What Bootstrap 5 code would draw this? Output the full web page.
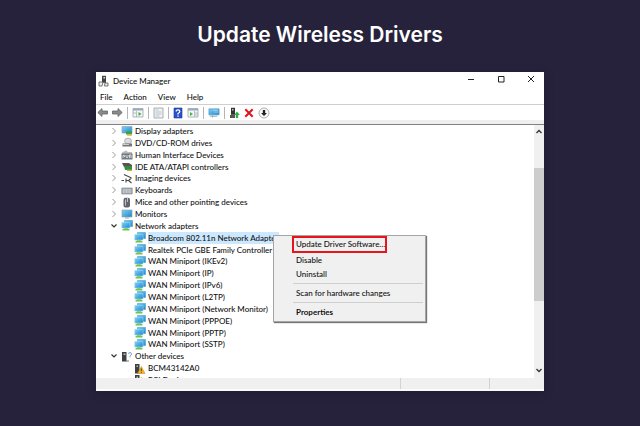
<!DOCTYPE html>
<html lang="en">
<head>
<meta charset="utf-8">
<meta name="viewport" content="width=device-width, initial-scale=1">
<title>Update Wireless Drivers</title>
<link rel="stylesheet" href="https://cdn.jsdelivr.net/npm/bootstrap@5.3.0/dist/css/bootstrap.min.css">
<style>
body { background: #26223c; color: #111; }
.page { min-height: 100vh; padding-top: 19px; }
.headline { font: 600 21px/32px Inter, sans-serif; color: #fff; margin-bottom: 21px; }
.win { width: 70%; background: #fff; font: 500 8px/12px Lato, sans-serif; box-shadow: 0 2px 10px rgba(0,0,0,.2); }
.win button, .win a { font: inherit; line-height: inherit; color: inherit; text-decoration: none; background: none; border: 0; padding: 0; }
.win svg { display: block; flex: none; }
.titlebar { height: 18px; padding: 0 2px; gap: 4px; }
.win .wbtn { width: 30px; height: 14px; display: flex; justify-content: center; align-items: center; }
.wbtns { margin-right: -4px; }
.menus { height: 14px; padding-left: 4px; gap: 11px; }
.tools { height: 16px; border-top: 1px solid #cfcfcf; padding: 0 1px; gap: 4px; }
.vsep { width: 1px; height: 12px; background: #b5b5b5; }
.rim { height: 5px; background: #efefef; border-bottom: 1px solid #808080; }
.view { height: 253px; }
.tree { height: 261px; margin: 0; padding: 0; list-style: none; }
.tree li { flex: 1 1 0; min-height: 0; display: flex; align-items: center; gap: 2px; padding-left: 15px; white-space: nowrap; }
.tree li.kid { padding-left: 38px; }
.chev { width: 6px; margin-right: 2px; }
.sel { background: #cce8ff; }
.scroll { width: 10px; background: #f0f0f0; }
.thumb { height: 133px; margin-top: 31px; background: #cdcdcd; }
.status { height: 13px; background: #f0f0f0; border-bottom: 2px solid #fafafa; }
.cell { border-right: 1px solid #d2d2d2; }
.cell-main { width: 68%; }
.cell-mid { width: 20%; }
.ctx { position: absolute; left: 177px; top: 163px; width: 153px; background: #f0f0f0; border: 1px solid #a5a5a5; box-shadow: 1px 1px 1px #777; padding: 0 1px 2px; line-height: 14px; }
.win .ctx button { display: block; text-align: left; padding-left: 21px; width: 100%; }
.win .ctx .hot { width: 95px; height: 17px; margin-left: 17px; padding-left: 2px; border: 2px solid #e8141c; line-height: 13px; white-space: nowrap; }
.rule { height: 1px; background: #cfcfcf; margin: 2px 1px 2px 18px; }
</style>
</head>
<body>
<svg width="0" height="0" class="position-absolute" aria-hidden="true">
<defs>
<linearGradient id="scr" x1="0" y1="0" x2="1" y2="1"><stop offset="0" stop-color="#7fd0f5"/><stop offset="1" stop-color="#1d87cf"/></linearGradient>
<symbol id="right" viewBox="0 0 6 8"><path d="M1.500 1 4.500 4 1.500 7" fill="none" stroke="#9a9a9a"/></symbol>
<symbol id="down" viewBox="0 0 6 8"><path d="M.5 2.500 3 5 5.500 2.500" fill="none" stroke="#333" stroke-width="1.200"/></symbol>
<symbol id="net" viewBox="0 0 12 11"><path d="M3.500 .5h8v6h-8z" fill="url(#scr)" stroke="#4e9fcb" stroke-width=".6"/><path d="M.8 2.500h8.200v5.500H.8z" fill="url(#scr)" stroke="#9bd6f2" stroke-width=".6"/><path d="M3.500 8.300h3l2 1v1.200H1.500V9.300z" fill="#6cc44e"/></symbol>
<symbol id="mon" viewBox="0 0 12 11"><path d="M1 2h10v7H1z" fill="url(#scr)" stroke="#8ba7b5" stroke-width=".7"/><path d="M4 9.500h4v1H4z" fill="#9aa"/></symbol>
<symbol id="disp" viewBox="0 0 12 11"><path d="M1 1.500h10v6.500H1z" fill="url(#scr)" stroke="#8ba7b5" stroke-width=".7"/><path d="M5 6.500h6v3H5z" fill="#39a345"/><path d="M6 9.500h5v1.200H6z" fill="#d6b325"/></symbol>
<symbol id="dvd" viewBox="0 0 12 11"><ellipse cx="7" cy="4" rx="3.500" ry="2.800" fill="#ddd" stroke="#999" stroke-width=".7"/><path d="M1.500 6.500h9.500v3H1.500z" fill="#777"/><path d="M2 7h6v1H2z" fill="#ccc"/></symbol>
<symbol id="hid" viewBox="0 0 12 11"><path d="M1 3.500 5 1.500 7 3h4v3H1z" fill="#bbb"/><path d="M.5 4.500h11v6H.5z" fill="#737b81"/><path d="M2 9V6.500h1.500V8M5 6v1.500L6 9l1-1.500V6M8.500 9V6H10v3" fill="none" stroke="#f1f1f1" stroke-width=".8"/></symbol>
<symbol id="ide" viewBox="0 0 12 11"><path d="M1 2h7l3 2v2H3z" fill="#555"/><path d="M3 5h8v4H4z" fill="#2f8c46"/><path d="M6 8.500h5V10H6z" fill="#c9a72b"/></symbol>
<symbol id="img" viewBox="0 0 12 11"><path d="M3 1.500 10.500 5M.5 7.500H3M5 5.500v4M5 7.500h2M10.500 5 7.500 7.500 10.500 10" fill="none" stroke="#444" stroke-width="1.100"/></symbol>
<symbol id="key" viewBox="0 0 12 11"><path d="M.8 3h10.400v6H.8z" fill="#a5abb0" stroke="#858b90" stroke-width=".7"/><path d="M2 5h8M2 7h8" stroke="#f3f3f3" stroke-width=".8" stroke-dasharray="1 .5"/></symbol>
<symbol id="mouse" viewBox="0 0 12 11"><rect x="2.500" y=".8" width="6.500" height="9.600" rx="2" fill="#60666b"/><path d="M4.500 2.500v6M6.500 1v4" stroke="#c9ced2" stroke-width=".9"/></symbol>
<symbol id="other" viewBox="0 0 12 11"><path d="M1 1h4.500v9.500H1z" fill="#3c4144"/><path d="M2.500 2.500h2V4h-2z" fill="#bbb"/><path d="M7.500 3q0-1.500 1.500-1.500T10.500 3Q10.500 4 9 5v1.200" fill="none" stroke="#7fa9cc"/><path d="M5 10h3" stroke="#777"/></symbol>
<symbol id="warn" viewBox="0 0 12 11"><path d="M1 1h4.500v9.500H1z" fill="#3c4144"/><path d="M2.500 2.500H4V4H2.500z" fill="#bbb"/><path d="M7.300 3.500 11 10.500H3.500z" fill="#f6b51e" stroke="#c98609" stroke-width=".5"/><path d="M7.300 5.500v2.500M7.300 8.800v1" stroke="#333" stroke-width=".9"/></symbol>
</defs>
</svg>
<main class="page">
<h1 class="headline text-center">Update Wireless Drivers</h1>
<section class="win position-relative mx-auto">
<header class="titlebar d-flex align-items-center">
<svg width="11" height="12" viewBox="0 0 11 12"><path d="M4 .8h4v7H4z" fill="#444"/><path d="M5.500 2H7v1.500H5.500z" fill="#ddd"/><path d="M1 7h4l-1 4H1zM7 8h3v3H6.500z" fill="#eee" stroke="#555" stroke-width=".8"/></svg>
<span>Device Manager</span>
<div class="wbtns d-flex ms-auto align-self-start">
<button class="wbtn" aria-label="Minimize"><svg width="8" height="8"><path d="M1 4.500h6" stroke="#222"/></svg></button>
<button class="wbtn" aria-label="Maximize"><svg width="8" height="8"><path d="M1.500 1.500h5.500v5.500h-5.500z" fill="none" stroke="#222"/></svg></button>
<button class="wbtn" aria-label="Close"><svg width="8" height="8"><path d="m1 1 6 6M7 1 1 7" stroke="#222"/></svg></button>
</div>
</header>
<nav class="menus d-flex align-items-center"><a href="#">File</a><a href="#">Action</a><a href="#">View</a><a href="#">Help</a></nav>
<div class="tools d-flex align-items-center">
<button aria-label="Back"><svg width="11" height="11" viewBox="0 0 11 11"><path d="M.8 5.500 5 1.500v2.500h5.500v3H5v2.500z" fill="#8b8b8b" stroke="#666" stroke-width=".8"/></svg></button>
<button aria-label="Forward"><svg width="11" height="11" viewBox="0 0 11 11"><path d="M10.200 5.500 6 1.500v2.500H.5v3H6v2.500z" fill="#8b8b8b" stroke="#666" stroke-width=".8"/></svg></button>
<span class="vsep"></span>
<button aria-label="Show console tree"><svg width="12" height="11" viewBox="0 0 12 11"><path d="M1 1.500h10v8.500H1z" fill="#f3f5f6" stroke="#9aa5ad" stroke-width=".8"/><path d="M1 1.500h10v2H1z" fill="#9babb8"/><path d="M4.500 4v6M1 6h3" stroke="#a5b0b8" stroke-width=".8"/><path d="m6.500 5 3 2-3 2z" fill="#46b244"/></svg></button>
<span class="vsep"></span>
<button aria-label="Properties"><svg width="11" height="12" viewBox="0 0 11 12"><path d="M1 1h9v10H1z" fill="#f1f3f4" stroke="#999" stroke-width=".8"/><path d="M2.500 3h3M2.500 5h6M2.500 7h6M2.500 9h4" stroke="#a5bac7" stroke-width=".8"/></svg></button>
<span class="vsep"></span>
<button aria-label="Help"><svg width="10" height="12" viewBox="0 0 10 12"><path d="M1 1h8v10H1z" fill="#2852c8" stroke="#173a98" stroke-width=".6"/><path d="M3.200 4.500Q3.200 2.800 5 2.800T6.800 4.500Q6.800 5.500 5 6.500v1M5 8.500v1.300" fill="none" stroke="#fff" stroke-width="1.300"/></svg></button>
<button aria-label="Show action pane"><svg width="12" height="11" viewBox="0 0 12 11"><path d="M1 1.500h10v8.500H1z" fill="#f3f5f6" stroke="#9aa5ad" stroke-width=".8"/><path d="M1 1.500h10v2H1z" fill="#9babb8"/><path d="M7.500 4v6M8 6h3M8 8h3" stroke="#a5b0b8" stroke-width=".8"/><path d="m3 5 3 2-3 2z" fill="#46b244"/></svg></button>
<span class="vsep"></span>
<button aria-label="Scan for hardware changes"><svg width="12" height="12" viewBox="0 0 13 12"><path d="M1 1.500h11v6.500H1z" fill="url(#scr)" stroke="#5d9fc4" stroke-width=".8"/><path d="M2 9.500h8M5 8.500v2.500" stroke="#8aa9ba"/><path d="M5 3h6M7 5h4" stroke="#b6e4f7" stroke-width=".8"/></svg></button>
<span class="vsep"></span>
<button aria-label="Update driver"><svg width="11" height="12" viewBox="0 0 11 12"><path d="M2 .8h4v7H2z" fill="#333"/><path d="M1 8h5v3H1z" fill="#555"/><path d="M3 2h1.500v1.500H3z" fill="#ccc"/><path d="M8 4.500 10.800 8H9.200v3H6.800V8H5.200z" fill="#2fae3a"/></svg></button>
<button aria-label="Uninstall"><svg width="10" height="10" viewBox="0 0 10 10"><path d="m1.300 1.300 7.400 7.400M8.700 1.300 1.300 8.700" stroke="#dc1420" stroke-width="2"/></svg></button>
<button aria-label="Disable"><svg width="12" height="12" viewBox="0 0 12 12"><circle cx="6" cy="6" r="5" fill="#fafafa" stroke="#999" stroke-width=".8"/><path d="M4.800 3h2.400v3H9L6 9 3 6h1.800z" fill="#222"/></svg></button>
</div>
<div class="rim"></div>
<div class="view d-flex overflow-hidden">
<ul class="tree d-flex flex-column flex-grow-1" id="tree"></ul>
<div class="scroll d-flex flex-column align-items-center pt-1">
<svg width="8" height="8"><path d="m1.500 4 2.500-2.500L6.500 4" fill="none" stroke="#333" stroke-width="1.300"/></svg>
<div class="thumb w-100"></div>
<svg class="mt-auto mb-1" width="8" height="8"><path d="m1.500 3 2.500 2.500L6.500 3" fill="none" stroke="#333" stroke-width="1.300"/></svg>
</div>
</div>
<footer class="status d-flex"><span class="cell cell-main"></span><span class="cell cell-mid"></span></footer>
<div class="ctx" role="menu">
<button class="hot" role="menuitem">Update Driver Software...</button>
<button role="menuitem">Disable</button>
<button role="menuitem">Uninstall</button>
<div class="rule"></div>
<button role="menuitem">Scan for hardware changes</button>
<div class="rule"></div>
<button class="fw-bold" role="menuitem">Properties</button>
</div>
</section>
</main>
<script>
const rows = [
["right","disp","Display adapters"],["right","dvd","DVD/CD-ROM drives"],["right","hid","Human Interface Devices"],
["right","ide","IDE ATA/ATAPI controllers"],["right","img","Imaging devices"],["right","key","Keyboards"],
["right","mouse","Mice and other pointing devices"],["right","mon","Monitors"],["down","net","Network adapters"],
["","net","Broadcom 802.11n Network Adapter"],["","net","Realtek PCIe GBE Family Controller"],["","net","WAN Miniport (IKEv2)"],
["","net","WAN Miniport (IP)"],["","net","WAN Miniport (IPv6)"],["","net","WAN Miniport (L2TP)"],
["","net","WAN Miniport (Network Monitor)"],["","net","WAN Miniport (PPPOE)"],["","net","WAN Miniport (PPTP)"],
["","net","WAN Miniport (SSTP)"],["down","other","Other devices"],["","warn","BCM43142A0"],["","warn","PCI Device"]];
document.getElementById("tree").innerHTML = rows.map(([c, i, t], n) =>
`<li class="${c ? "" : "kid"}">${c ? `<svg class="chev" height="8"><use href="#${c}"/></svg>` : ""}<svg width="12" height="11"><use href="#${i}"/></svg><span class="${n === 9 ? "sel" : ""}">${t}</span></li>`).join("");
</script>
<script src="https://cdn.jsdelivr.net/npm/bootstrap@5.3.0/dist/js/bootstrap.bundle.min.js"></script>
</body>
</html>
